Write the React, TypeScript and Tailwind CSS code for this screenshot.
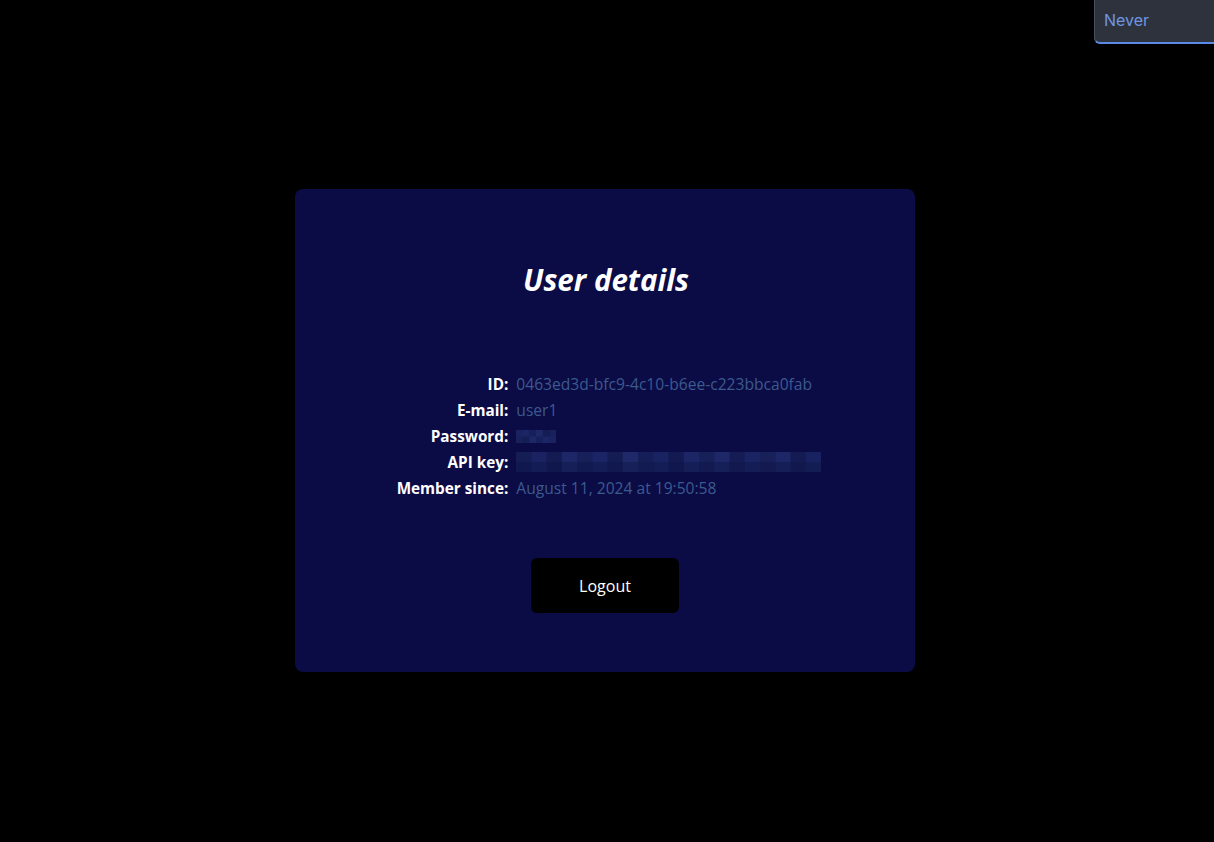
const font = { fontFamily: '"Open Sans", "Noto Sans", sans-serif' }

const pwBlocks = ['#1a2260', '#1c2566', '#16205a', '#1e2868', '#151d55', '#18215c']
const keyRow1 = ['#151d56', '#1a2262', '#131b52', '#1d2767', '#172059', '#1b2464', '#141c54', '#1f2969', '#161e57', '#1a2361', '#131a51', '#1c2666', '#182059', '#1e2768', '#151c55', '#1b2463', '#172058', '#1d2666', '#141b53', '#192261']
const keyRow2 = ['#111850', '#141c55', '#10174d', '#161f58', '#121a52', '#151d56', '#10184e', '#172059', '#131b53', '#141d55', '#10174e', '#161e57', '#121a51', '#171f58', '#11194f', '#151d56', '#131a52', '#161e57', '#10184e', '#141c54']

function Mosaic({ w, h, rows }: { w: number; h: number; rows: string[][] }) {
  const rh = h / rows.length
  return (
    <svg width={w} height={h} className="block">
      {rows.map((row, r) =>
        row.map((c, i) => {
          const cw = w / row.length
          return <rect key={`${r}-${i}`} x={i * cw} y={r * rh} width={cw + 0.5} height={rh + 0.5} fill={c} />
        })
      )}
    </svg>
  )
}

const labelCls = 'text-right text-[15.3px] font-bold text-white'
const valueCls = 'text-[15.6px] text-[#3b5a8e]'

export default function App() {
  return (
    <div className="relative min-h-[842px] w-full bg-black" style={font}>
      <div className="absolute right-0 top-0 h-[44px] w-[120px] rounded-bl-md border-b-2 border-l border-b-[#5b8ae6] border-l-[#4a5060] bg-[#2e323c] pl-[9px] pt-[10px] text-[16px] leading-[20px] text-[#6f97e3]" style={{ fontFamily: 'Inter, sans-serif' }}>
        Never
      </div>

      <div className="flex justify-center pr-[4px] pt-[189px]">
        <div className="flex h-[483px] w-[620px] flex-col items-center rounded-lg bg-[#0b0b45] pt-[71px]">
          <h1 className="ml-[2px] text-[29.5px] font-bold italic leading-[40px] text-white">User details</h1>

          <div className="ml-[8px] mt-[71px] grid grid-cols-[auto_auto] gap-x-2 leading-[26px]">
            <div className={labelCls}>ID:</div>
            <div className={valueCls}>0463ed3d-bfc9-4c10-b6ee-c223bbca0fab</div>
            <div className={labelCls}>E-mail:</div>
            <div className={valueCls}>user1</div>
            <div className={labelCls}>Password:</div>
            <div className="flex items-center">
              <Mosaic w={40} h={13} rows={[pwBlocks, pwBlocks.slice().reverse()]} />
            </div>
            <div className={labelCls}>API key:</div>
            <div className="flex items-center">
              <Mosaic w={305} h={20} rows={[keyRow1, keyRow2]} />
            </div>
            <div className={labelCls}>Member since:</div>
            <div className={valueCls}>August 11, 2024 at 19:50:58</div>
          </div>

          <button className="mt-[57px] h-[55px] w-[148px] rounded-md bg-black text-[16px] text-white">Logout</button>
        </div>
      </div>
    </div>
  )
}
